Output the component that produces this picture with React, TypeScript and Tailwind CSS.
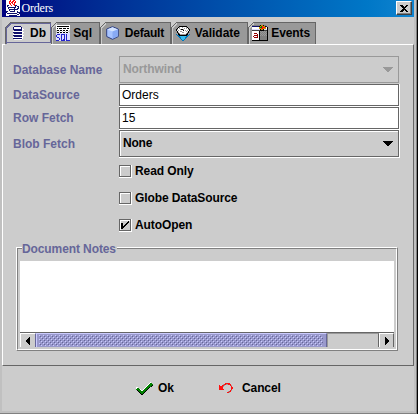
import React from "react";

const palette: Record<string, string> = {
  k: "#000000", w: "#ffffff", n: "#10106c", b: "#2222cc", g: "#808080", l: "#cccccc",
  d: "#404040", r: "#ff1010", p: "#ff9c9c", G: "#008000", t: "#0077bb", T: "#33bbee",
  y: "#cc9900", m: "#990000", e: "#666666", v: "#ddddff", x: "#999999",
};

function Pixels({ rows }: { rows: string[] }) {
  const w = Math.max(...rows.map((r) => r.length));
  return (
    <svg width={w} height={rows.length} viewBox={`0 0 ${w} ${rows.length}`} shapeRendering="crispEdges" className="block shrink-0">
      {rows.flatMap((row, y) =>
        [...row].map((ch, x) => (ch === "." ? null : <rect key={`${x}-${y}`} x={x} y={y} width="1" height="1" fill={palette[ch]} />)),
      )}
    </svg>
  );
}

const java = [
  "wwwwrwwrrwwwww",
  "wwwrrwrrwrwwww",
  "wwwrwrrwrrwwww",
  "wwwrrwrwrwwwww",
  "wwwwrwwrrwwwww",
  "wnnwwrwwrnnwww",
  "wnwwwwwwwnwnnw",
  "wwnnnnnnnnwwnw",
  "wwnwwwwwnwwnnw",
  "wwwnnnnnnnnnww",
  "wwwnwwwwnwwwww",
  "nnwwnnnnnwwnww",
  "nwwwwwwwwwwnnn",
  "wnnnnnnnnnnwwn",
  "wwwwwwwwwwwnnw",
  "wwwnnnnnnnnwww",
];
const db = [
  "..nnnnnnn...",
  ".nwwwwwwwn..",
  ".nwwwwwwwnw.",
  ".nnnnnnnnnww",
  "..nnnnnnnnw.",
  ".wwwwwwwwww.",
  ".nnnnnnnnnww",
  "..nnnnnnnnw.",
  ".wwwwwwwwww.",
  ".nnnnnnnnnww",
  "..nnnnnnnnw.",
  ".wwwwwwwwww.",
  ".nnnnnnnnnw.",
  "..wwwwwwww..",
];
const sql = [
  "wwwwwwwwwwwwww",
  "wkkkkkkkkkkkkw",
  "wwwwwwwwwwwwww",
  "wkwkkkwkkkwkkw",
  "wwwwwwwwwwwwww",
  "lkkwkkwkkwkkwl",
  "lwwlwwlwwlwwll",
  "lkkwkkwkkwkkwl",
  "vvvvvvvvvvvvvv",
  "vbbbvbbbbvbvvv",
  "bvvvvbvvbvbvvv",
  "bvvvvbvvbvbvvv",
  "vbbvvbvvbvbvvv",
  "vvvbvbvvbvbvvv",
  "vvvbvbvbbvbvvv",
  "bbbvvbbbbvbbbb",
];
const valid = [
  "...kkkkkkkk...",
  "..kxwwxwwwxk..",
  ".kwxwwwwxwxwk.",
  "kxwwxkkxwwwwxk",
  "kwxwwwwkwxwxwk",
  ".kwwxxwwwwxwk.",
  ".kxwwwxxwwwxk.",
  "..kxwwwwwwxk..",
  "t.kkxxxxxxkk.t",
  ".ttkkkkkkkktt.",
  "..ttTTTTTTtt..",
  "...ttTTTTtt...",
  "....tTTTTt....",
  ".....tTTt.....",
  "......tt......",
];
const events = [
  "ggggggggkyykgg..",
  "nnnnnnnkyGryykn.",
  "wwwwwwwyGGrrrywk",
  "wwwwwwwyyrryyywk",
  "vvvvvvvvkyykvvvk",
  "ddddddddkkkkdddk",
  "wwwwwwwkxgxgxgxk",
  "wwwwwwwkgxgxgxgk",
  "wwmmmwwkxgxgxgxk",
  "wwwwwmwkgxgxgxgk",
  "wwmmmmwkxgxgxgxk",
  "wmwwwmwkgggggggk",
  "wwmmmmwkgggggggk",
  "wwwwwwwkgggggggk",
  "wwwwwwwkgggggggk",
  "kkkkkkkkkkkkkkkk",
];
const okMark = [
  "..............w..",
  ".............wGG.",
  "............wGGGG",
  "...........wGGGGk",
  "..........wGGGGk.",
  "ww.......wGGGk...",
  "wGG.....wGGGk....",
  "GGGGw..wGGGk.....",
  ".kGGGwwGGGk......",
  "..kGGGGGGk.......",
  "...kGGGGk........",
  "....kGGk.........",
  ".....kk..........",
];
const cancelMark = [
  "......rrrrr...",
  "....xrrxxrrr..",
  "r..rrx.....rx.",
  "rrrrx.......r.",
  "rrrr........rr",
  "rrrr........rr",
  "rrrrr.......r.",
  "...........rx.",
  ".........xrr..",
  "........rrx...",
];
const tick = [".......k", "......kk", "kk...kk.", "kk..kk..", "kk.kk...", "kkkk....", "kkk.....", "kk......"];
const down = ["oooooooooo", ".oooooooo.", "..oooooo..", "...oooo...", "....oo...."];
const left = ["...k", "..kk", ".kkk", "kkkk", "kkkk", ".kkk", "..kk", "...k"];
const right = ["k...", "kk..", "kkk.", "kkkk", "kkkk", "kkk.", "kk..", "k..."];

function Cube() {
  return (
    <svg width="13" height="14" viewBox="0 0 13 14" className="block shrink-0">
      <path d="M6.5.7 12.3 3v7.5L6.5 13.3.7 10.5V3Z" fill="#a8c4ff" stroke="#304080" />
      <path d="M1.2 3.4 6.5 5.6 11.8 3.4 6.5 1.3Z" fill="#d4e4ff" />
      <path d="M6.5 5.6 11.8 3.4v6.8l-5.3 2.6Z" fill="#88aaf4" />
    </svg>
  );
}

type TabProps = { icon: React.ReactNode; label: string; width: string; pad: string; selected?: boolean };

function Tab({ icon, label, width, pad, selected = false }: TabProps) {
  return (
    <div className={`relative flex shrink-0 items-center ${pad} ${width} ${selected ? "h-[23px] bg-[#ccc] pb-px" : "h-[22px] bg-[#999]"}`}>
      <svg className="absolute inset-0 h-full w-full" shapeRendering="crispEdges">
        <path d="M0 0H5L0 5Z" fill="#ccc" />
        <path d="M.5 22V5.5L5.5.5H100" fill="none" stroke="#666" />
        {selected ? (
          <path d="M1.5 22V6L6 1.5H45.5V20.5H1" fill="none" stroke="#666699" />
        ) : (
          <path d="M1.5 22V6L6 1.5" fill="none" stroke="#ccc" />
        )}
      </svg>
      <div className="relative">{icon}</div>
      <span className="relative ml-auto leading-[14px]">{label}</span>
      {!selected && <i className="absolute top-0 right-0 h-full w-px bg-[#666]" />}
    </div>
  );
}

function Arrow({ color }: { color: string }) {
  return (
    <svg width="10" height="5" viewBox="0 0 10 5" shapeRendering="crispEdges" className={`mt-[11px] ml-auto block ${color}`}>
      {down.map((row, y) => (
        <rect key={y} x={row.indexOf("o")} y={y} width={row.replaceAll(".", "").length} height="1" fill="currentColor" />
      ))}
    </svg>
  );
}

function Row({ label, height, pad, children }: { label: string; height: string; pad: string; children: React.ReactNode }) {
  return (
    <div className={`flex ${height}`}>
      <span className={`w-[106px] shrink-0 leading-4 text-[#666699] ${pad}`}>{label}</span>
      {children}
    </div>
  );
}

function TextField({ value }: { value: string }) {
  return (
    <div className="h-[23px] flex-1 border-r border-b border-white">
      <div className="h-[22px] border border-[#666] bg-white pt-0.5 pl-0.5 leading-4 font-normal">{value}</div>
    </div>
  );
}

function Check({ label, checked = false }: { label: string; checked?: boolean }) {
  return (
    <div className="flex h-[27px] items-start">
      <div className="size-[13px] border-r border-b border-white">
        <div className="flex size-3 items-center justify-center border border-[#666] shadow-[inset_1px_1px_#fff]">
          {checked && <Pixels rows={tick} />}
        </div>
      </div>
      <span className="-mt-0.5 ml-[3px] leading-4 tracking-[-0.1px]">{label}</span>
    </div>
  );
}

export default function App() {
  return (
    <div className="flex h-[414px] w-[418px] overflow-hidden border-r border-black bg-[#ccc] font-['Liberation_Sans',Arial,sans-serif] text-[12px] font-bold whitespace-nowrap text-black">
      <div className="flex h-full w-full flex-col border-r border-b border-[#808080] bg-[#c0c0c0] pr-0.5 pb-0.5 pl-0.5">
        <div className="flex min-h-0 flex-1 flex-col bg-[#ccc]">
          <header className="flex h-[17px] shrink-0 items-start bg-linear-to-r from-[#000080] to-[#1084d0] pr-0.5 pl-1">
            <Pixels rows={java} />
            <span className="ml-[1.5px] font-['Liberation_Serif',serif] text-[12px] leading-4 font-normal tracking-[-0.2px] text-white">Orders</span>
            <div className="mt-px ml-auto flex h-[14px] w-4 items-center justify-center border border-t-white border-r-[#404040] border-b-[#404040] border-l-white bg-[#ccc] shadow-[inset_-1px_-1px_#808080]">
              <svg width="8" height="7" viewBox="0 0 8 7" shapeRendering="crispEdges">
                <path d="M0 0h2l2 2 2-2h2L5 3.5 8 7H6L4 5 2 7H0l3-3.5Z" />
              </svg>
            </div>
          </header>

          <nav className="relative z-10 flex h-[27px] shrink-0 items-start pt-[5px] pl-[3px]">
            <Tab icon={<Pixels rows={db} />} label="Db" width="w-[46px] pr-[5px]" pad="pl-[7px]" selected />
            <Tab icon={<Pixels rows={sql} />} label="Sql" width="w-[49px] pr-2" pad="pl-[5px]" />
            <Tab icon={<Cube />} label="Default" width="w-[71px] pr-[7px] tracking-[-0.2px]" pad="pl-[6px]" />
            <Tab icon={<Pixels rows={valid} />} label="Validate" width="w-[77px] pr-2" pad="pl-[5px]" />
            <Tab icon={<Pixels rows={events} />} label="Events" width="w-[68px] pr-1.5 tracking-[-0.1px]" pad="pl-1" />
          </nav>

          <main className="flex h-[322px] shrink-0 flex-col border border-t-white border-r-[#666] border-b-[#666] border-l-white pt-[11px]">
            <div className="pr-[13px] pl-[10px]">
              <Row label="Database Name" height="h-7" pad="pt-1.5">
                <div className="mr-px flex h-[27px] flex-1 border border-[#999] pt-1 pr-[5px] pl-[3px] leading-4 text-[#999]">
                  <span className="tracking-[-0.1px]">Northwind</span>
                  <div className="ml-auto -mt-[5px]"><Arrow color="text-[#999]" /></div>
                </div>
              </Row>
              <Row label="DataSource" height="h-[23px]" pad="pt-[3px]"><TextField value="Orders" /></Row>
              <Row label="Row Fetch" height="h-[23px]" pad="pt-[3px]"><TextField value="15" /></Row>
              <Row label="Blob Fetch" height="h-7" pad="pt-1.5">
                <div className="flex-1 border-r border-b border-white">
                  <div className="flex h-[27px] border border-[#666] pt-1 pr-[5px] pl-[3px] leading-4 shadow-[inset_1px_1px_#fff]">
                    <span className="tracking-[-0.2px]">None</span>
                    <div className="ml-auto -mt-[5px]"><Arrow color="text-black" /></div>
                  </div>
                </div>
              </Row>
            </div>

            <div className="mt-[7px] pl-[116px]">
              <Check label="Read Only" />
              <Check label="Globe DataSource" />
              <Check label="AutoOpen" checked />
            </div>

            <section className="mt-px mr-[15px] ml-[13px] h-[104px] border border-t-white border-r-[#808080] border-b-[#808080] border-l-white">
              <div className="h-[102px] border border-t-[#808080] border-r-white border-b-white border-l-[#808080] px-0.5">
                <h2 className="-mt-2 ml-0.5 h-5 w-[95px] text-[#666699]">
                  <span className="block h-4 bg-[#ccc] leading-4 tracking-[-0.1px]">Document Notes</span>
                </h2>
                <div className="h-[71px] bg-white" />
                <div className="flex h-[15px] border-t border-[#666]">
                  <div className="flex w-4 items-center justify-center border-t border-r border-l border-t-white border-r-[#666699] border-l-white">
                    <Pixels rows={left} />
                  </div>
                  <div className="w-[291px] border-t border-r border-l border-t-[#ccccff] border-r-[#666699] border-l-[#ccccff] bg-[#9999cc] pt-px pl-0.5">
                    <svg width="284" height="11" shapeRendering="crispEdges" className="block">
                      <defs>
                        <pattern id="grip" width="4" height="4" patternUnits="userSpaceOnUse">
                          <path d="M0 0h1v1H0ZM2 2h1v1H2Z" fill="#ccccff" />
                          <path d="M1 1h1v1H1ZM3 3h1v1H3Z" fill="#666699" />
                        </pattern>
                      </defs>
                      <rect width="284" height="11" fill="url(#grip)" />
                    </svg>
                  </div>
                  <div className="flex-1 border-t border-r border-l border-t-[#999] border-r-[#666] border-l-[#999]" />
                  <div className="flex w-[15px] items-center justify-center border-t border-r border-l border-t-white border-r-[#666] border-l-white">
                    <Pixels rows={right} />
                  </div>
                </div>
              </div>
            </section>
          </main>

          <footer className="flex items-start pt-3.5 pl-[134px] leading-4">
            <div className="flex w-[83px]">
              <div className="mt-0.5"><Pixels rows={okMark} /></div>
              <span className="ml-[5px]">Ok</span>
            </div>
            <div className="flex">
              <div className="mt-[3px]"><Pixels rows={cancelMark} /></div>
              <span className="ml-[9px] tracking-[-0.1px]">Cancel</span>
            </div>
          </footer>
        </div>
      </div>
    </div>
  );
}
